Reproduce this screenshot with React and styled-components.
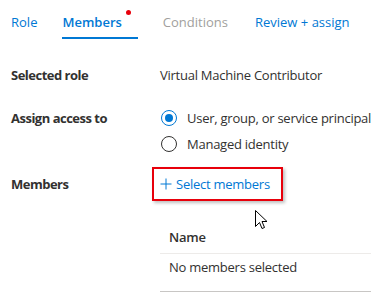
import React from "react";
import styled, { createGlobalStyle } from "styled-components";

const Global = createGlobalStyle`
  html, body { margin: 0; padding: 0; background: #fff; }
  body { font-family: "Open Sans", "Noto Sans", sans-serif; color: #323130; }
`;

const Page = styled.div`
  position: relative;
  width: 371px;
  height: 303px;
  overflow: hidden;
  font-size: 13px;
  line-height: 20px;
  letter-spacing: -0.25px;
`;

const TabBar = styled.div`
  display: flex;
  gap: 25px;
  padding-left: 11px;
  letter-spacing: 0;
`;

const Tab = styled.div`
  position: relative;
  padding: 12px ${(p) => (p.$dot ? "16px" : "0")} 5px 0;
  margin-left: ${(p) => p.$ml || 0}px;
  border-bottom: 2px solid ${(p) => (p.$active ? "#0078d4" : "transparent")};
  color: ${(p) => (p.$disabled ? "#a19f9d" : "#0078d4")};
  font-weight: ${(p) => (p.$active ? 600 : 400)};
  white-space: nowrap;
`;

const Dot = styled.span`
  position: absolute;
  right: 7px;
  top: 10px;
  width: 5px;
  height: 5px;
  border-radius: 50%;
  background: #e8000b;
`;

const Form = styled.div`
  display: grid;
  grid-template-columns: 149px 1fr;
  padding-left: 11px;
  margin-top: 26px;
`;

const Label = styled.div`
  font-weight: 700;
  letter-spacing: -0.5px;
  margin-top: ${(p) => p.$mt || 0}px;
  align-self: ${(p) => (p.$center ? "center" : "start")};
`;

const Value = styled.div`
  margin-top: ${(p) => p.$mt || 0}px;
  white-space: nowrap;
`;

const Options = styled.div`
  display: flex;
  flex-direction: column;
  gap: 6px;
`;

const Option = styled.label`
  display: flex;
  align-items: center;
  gap: 10px;
  padding-left: 1px;
  white-space: nowrap;
`;

const Radio = styled.span`
  width: 16px;
  height: 16px;
  box-sizing: border-box;
  border-radius: 50%;
  border: 1px solid ${(p) => (p.$checked ? "#0078d4" : "#323130")};
  display: flex;
  align-items: center;
  justify-content: center;
  flex: none;
  &::after {
    content: "";
    width: 8px;
    height: 8px;
    border-radius: 50%;
    background: ${(p) => (p.$checked ? "#0078d4" : "transparent")};
  }
`;

const SelectButton = styled.div`
  margin-left: -8px;
  width: 131px;
  height: 34px;
  box-sizing: border-box;
  border: 2px solid #e8000b;
  box-shadow: 2px 2px 3px rgba(0, 0, 0, 0.25);
  display: flex;
  align-items: center;
  padding-left: 6px;
  gap: 4px;
  color: #0078d4;
  white-space: nowrap;
`;

const Table = styled.div`
  grid-column: 2;
  margin-top: 19px;
  margin-right: -20px;
`;

const HeaderRow = styled.div`
  height: 34px;
  box-sizing: border-box;
  padding: 7px 0 0 9px;
  border-bottom: 1px solid #edebe9;
  font-weight: 600;
`;

const DataRow = styled.div`
  box-sizing: border-box;
  height: 38px;
  padding: 3px 0 0 9px;
  border-bottom: 1px solid #c8c6c4;
`;

const Cursor = styled.svg`
  position: absolute;
  left: 255px;
  top: 210px;
`;

export default function App() {
  return (
    <Page>
      <Global />
      <TabBar>
        <Tab>Role</Tab>
        <Tab $active $dot>
          Members
          <Dot />
        </Tab>
        <Tab $disabled>Conditions</Tab>
        <Tab $ml={2}>Review + assign</Tab>
      </TabBar>
      <Form>
        <Label>Selected role</Label>
        <Value>Virtual Machine Contributor</Value>

        <Label $mt={23}>Assign access to</Label>
        <Value $mt={23}>
          <Options>
            <Option>
              <Radio $checked />
              User, group, or service principal
            </Option>
            <Option>
              <Radio />
              Managed identity
            </Option>
          </Options>
        </Value>

        <Label $mt={13} $center>Members</Label>
        <Value $mt={13}>
          <SelectButton>
            <svg width="12" height="12" viewBox="0 0 12 12">
              <path d="M6 0.5V11.5M0.5 6H11.5" stroke="#0078d4" strokeWidth="1" fill="none" />
            </svg>
            Select members
          </SelectButton>
        </Value>

        <Table>
          <HeaderRow>Name</HeaderRow>
          <DataRow>No members selected</DataRow>
        </Table>
      </Form>
      <Cursor width="13" height="21" viewBox="0 0 13 21">
        <path
          d="M0.5 0.5 L0.5 16.5 L4.5 12.5 L7 18.5 L9.5 17.5 L7 11.5 L12 11.5 Z"
          fill="#fff"
          stroke="#000"
          strokeWidth="1"
          strokeLinejoin="miter"
        />
      </Cursor>
    </Page>
  );
}
